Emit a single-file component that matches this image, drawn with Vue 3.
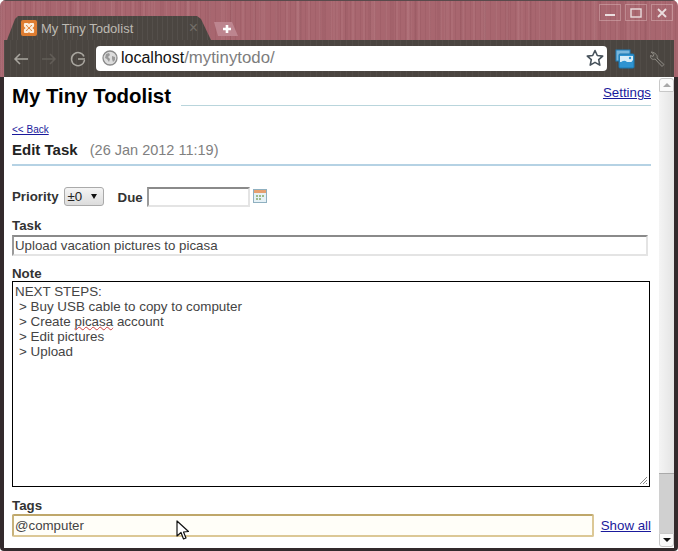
<script setup>
</script>

<template>
  <div class="window">
    <div class="chrome">
      <div class="tabstrip">
        <div class="tab">
          <svg class="favicon" width="16" height="16" viewBox="0 0 16 16">
            <rect width="16" height="16" rx="2" fill="#de7c30" />
            <path d="M4 4h2.500L8 6l1.500-2H12v2l-2 2 2 2v2H9.500L8 10l-1.500 2H4v-2l2-2-2-2z" fill="none" stroke="#fbeede" stroke-width="2.200" stroke-linejoin="round" />
          </svg>
          <span class="tab-title">My Tiny Todolist</span>
          <span class="tab-close">×</span>
        </div>
        <div class="newtab">
          <svg width="10" height="10" viewBox="0 0 10 10"><path d="M5 1v8M1 5h8" stroke="#fff" stroke-width="2.600" /></svg>
        </div>
        <div class="controls">
          <div class="ctl"><svg width="12" height="10" viewBox="0 0 12 10"><path d="M1 7h10" stroke="#eaddde" stroke-width="2" /></svg></div>
          <div class="ctl"><svg width="12" height="10" viewBox="0 0 12 10"><rect x="1" y="1" width="10" height="8" fill="none" stroke="#eaddde" stroke-width="1.400" /></svg></div>
          <div class="ctl"><svg width="12" height="12" viewBox="0 0 12 12"><path d="M2 2l8 8M10 2l-8 8" stroke="#eaddde" stroke-width="1.800" /></svg></div>
        </div>
      </div>
      <div class="toolbar">
        <div class="navs">
          <svg width="18" height="18" viewBox="0 0 18 18"><path d="M16 9H3M8 4L3 9l5 5" fill="none" stroke="#a9a69f" stroke-width="1.500" /></svg>
          <svg width="18" height="18" viewBox="0 0 18 18"><path d="M2 9h13M10 4l5 5-5 5" fill="none" stroke="#625d57" stroke-width="1.500" /></svg>
          <svg width="18" height="18" viewBox="0 0 18 18"><path d="M15 6.500A6.500 6.500 0 1 0 15.500 10M9 9h7" fill="none" stroke="#a9a69f" stroke-width="1.500" /></svg>
        </div>
        <div class="omnibox">
          <svg width="16" height="16" viewBox="0 0 16 16">
            <circle cx="8" cy="8" r="7" fill="#dcdcdc" stroke="#8a8a8a" stroke-width="1.300" />
            <path d="M4 4l3-1 1 2-2 2 2 2-1 3-2-3-2-1zM10 6l3 1 0 3-2 2-1-3z" fill="#9a9a9a" />
          </svg>
          <span class="url"><span class="host">localhost</span><span class="path">/mytinytodo/</span></span>
          <svg class="star" width="18" height="18" viewBox="0 0 18 18"><path d="M9 1.500l2.300 5 5.400.6-4 3.600 1.100 5.400L9 13.400l-4.800 2.700 1.100-5.400-4-3.600 5.400-.6z" fill="#fff" stroke="#48535c" stroke-width="1.600" stroke-linejoin="round" /></svg>
        </div>
        <div class="tools">
          <svg width="20" height="20" viewBox="0 0 20 20">
            <rect x="1" y="1" width="14" height="11" fill="#7ab7dc" stroke="#1d7cb8" />
            <rect x="4" y="5" width="15" height="14" rx="1" fill="#2f93d0" stroke="#1b76ae" />
            <rect x="5" y="7" width="13" height="6" fill="#d6ecf7" />
            <path d="M5 14q4-4 7-1t6-2v7H5z" fill="#2f93d0" />
            <circle cx="15" cy="9" r="1.200" fill="#2f93d0" />
          </svg>
          <svg width="18" height="18" viewBox="0 0 18 18"><path d="M3 2l3 2.500-1 2-2.500-1C2 9 5 10 7 9l7 7.500 2-2L9 8c1-2-1-5.500-6-6z" fill="#4f4b46" stroke="#8f8b84" stroke-width="1" /></svg>
        </div>
      </div>
    </div>
    <div class="frame">
      <div class="page">
        <div class="content">
          <header class="header">
            <h1 class="title">My Tiny Todolist</h1>
            <div class="header-rule"><a class="settings">Settings</a></div>
          </header>
          <a class="back">&lt;&lt; Back</a>
          <h2 class="edit">Edit Task <span class="date">(26 Jan 2012 11:19)</span></h2>
          <div class="row">
            <span class="label">Priority</span>
            <span class="select">±0 <i class="caret"></i></span>
            <span class="label due">Due</span>
            <span class="field due-field"></span>
            <svg class="cal" width="14" height="14" viewBox="0 0 14 14">
              <rect x=".5" y=".5" width="13" height="13" fill="#e6f1f6" stroke="#8fb0c0" />
              <rect x="1" y="1" width="12" height="3" fill="#e6a070" />
              <path d="M3 6h2v2H3zM6 6h2v2H6zM9 6h2v2H9zM3 9h2v2H3zM6 9h2v2H6z" fill="#9dbb8a" />
            </svg>
          </div>
          <div class="label block task-label">Task</div>
          <div class="field task">Upload vacation pictures to picasa</div>
          <div class="label block note-label">Note</div>
          <div class="note">
            <div>NEXT STEPS:</div>
            <div class="ind">&gt; Buy USB cable to copy to computer</div>
            <div class="ind">&gt; Create <span class="spell">picasa</span> account</div>
            <div class="ind">&gt; Edit pictures</div>
            <div class="ind">&gt; Upload</div>
            <svg class="grip" width="9" height="9" viewBox="0 0 9 9"><path d="M8 1L1 8M8 4L4 8M8 7L7 8" stroke="#888" stroke-width="1" /></svg>
          </div>
          <div class="label block tags-label">Tags</div>
          <div class="tags-row">
            <div class="tags">@computer</div>
            <a class="showall">Show all</a>
          </div>
          <svg class="cursor" width="14" height="21" viewBox="0 0 14 21"><path d="M1 1v15l4-3.500 2.500 6.500 2.500-1-2.500-6 5-.5z" fill="#fff" stroke="#111" stroke-width="1.200" stroke-linejoin="round" /></svg>
        </div>
        <div class="scrollbar">
          <div class="sb-btn"><i class="up"></i></div>
          <div class="thumb"></div>
          <div class="track"></div>
          <div class="sb-btn down"><i class="dn"></i></div>
        </div>
      </div>
    </div>
  </div>
</template>

<style>
html, body { margin: 0; background: #fff; }
</style>

<style scoped>
.window {
  width: 678px;
  height: 551px;
  display: flex;
  flex-direction: column;
  overflow: hidden;
  border-radius: 6px 6px 4px 4px;
  font-family: "Liberation Sans", Arial, sans-serif;
}
.chrome {
  padding: 0 4px;
  background-color: #a8666f;
  background-image:
    repeating-linear-gradient(90deg, rgba(70, 20, 30, .07) 0 1px, transparent 1px 5px),
    repeating-linear-gradient(90deg, rgba(255, 220, 220, .06) 0 2px, transparent 2px 11px),
    repeating-linear-gradient(90deg, rgba(70, 20, 30, .05) 0 3px, transparent 3px 23px),
    repeating-linear-gradient(90deg, rgba(255, 220, 220, .04) 0 5px, transparent 5px 37px);
  box-shadow: inset 0 1px 0 #5a4a4c;
}
.tabstrip {
  height: 40px;
  display: flex;
  align-items: flex-end;
  position: relative;
}
.tab {
  width: 206px;
  height: 24px;
  margin-left: 3px;
  padding: 0 8px 0 14px;
  box-sizing: border-box;
  display: flex;
  align-items: center;
  gap: 4px;
  background: #4b4641;
  background-image: repeating-linear-gradient(90deg, rgba(255, 255, 255, .05) 0 1px, transparent 1px 5px);
  clip-path: polygon(0 100%, 8px 3px, 11px 0, 190px 0, 194px 3px, 204px 100%);
}
.favicon { flex: none; }
.tab-title {
  flex: 1;
  font-size: 13px;
  color: #bdbab3;
}
.tab-close { color: #726e68; font-size: 16px; margin-right: 7px; }
.newtab {
  width: 24px;
  height: 14px;
  margin: 0 0 4px 1px;
  display: flex;
  align-items: center;
  justify-content: center;
  background: #bd858f;
  clip-path: polygon(0 0, 18px 0, 24px 100%, 4px 100%);
}
.newtab svg { margin-left: 2px; }
.controls {
  margin-left: auto;
  margin-right: 1px;
  align-self: flex-start;
  margin-top: 4px;
  display: flex;
  gap: 4px;
}
.ctl {
  width: 20px;
  height: 15px;
  border: 1px solid rgba(240, 215, 215, .35);
  display: flex;
  align-items: center;
  justify-content: center;
}
.toolbar {
  height: 37px;
  display: flex;
  align-items: center;
  background: #4a4540;
  background-image: repeating-linear-gradient(90deg, rgba(255, 255, 255, .04) 0 1px, transparent 1px 6px);
}
.navs {
  width: 92px;
  padding-left: 8px;
  box-sizing: border-box;
  display: flex;
  gap: 10px;
}
.navs svg:last-child { margin-left: 1px; }
.omnibox {
  width: 511px;
  height: 25px;
  margin-top: -1px;
  padding: 0 3px 0 6px;
  box-sizing: border-box;
  display: flex;
  align-items: center;
  gap: 3px;
  background: #fff;
  border-radius: 4px;
}
.url { flex: 1; }
.host { color: #111; font-size: 16px; }
.path { color: #7d7d7d; font-size: 16.800px; }
.star { flex: none; }
.tools {
  flex: 1;
  padding-left: 8px;
  display: flex;
  align-items: center;
  gap: 13px;
}
.frame {
  flex: 1;
  min-height: 0;
  padding: 0 4px 3px;
  background: #332a2c;
  display: flex;
}
.page {
  flex: 1;
  display: flex;
  background: #fff;
}
.content {
  flex: 1;
  min-width: 0;
  padding: 0 8px;
  position: relative;
  color: #333;
}
.header {
  height: 29px;
  display: flex;
  align-items: flex-end;
  gap: 10px;
}
.title {
  margin: 0;
  font-size: 20.400px;
  line-height: 20px;
  font-weight: 700;
  color: #000;
}
.header-rule {
  flex: 1;
  height: 28px;
  box-sizing: border-box;
  display: flex;
  justify-content: flex-end;
  border-bottom: 1px solid #b9d5dc;
}
a { color: #1a1a9c; text-decoration: underline; }
.settings { font-size: 13.300px; line-height: 30px; }
.back {
  display: block;
  margin-top: 18px;
  font-size: 10px;
  line-height: 12px;
}
.edit {
  margin: 4px 0 0;
  height: 21px;
  box-sizing: border-box;
  font-size: 15px;
  line-height: 20px;
  color: #222;
}
.date { font-weight: 400; font-size: 14.500px; color: #808080; margin-left: 8px; }
.row {
  margin-top: 3px;
  padding-top: 19px;
  border-top: 2px solid #b5d2e4;
  height: 22px;
  display: flex;
  align-items: center;
}
.label { font-size: 13.300px; font-weight: 700; color: #333; }
.block { line-height: 15px; }
.select {
  margin-left: 5px;
  width: 40px;
  height: 19px;
  padding-left: 3px;
  box-sizing: border-box;
  border: 1px solid #aaa;
  border-radius: 3px;
  background: linear-gradient(#f4f4f4, #dcdcdc);
  font-size: 13.300px;
  line-height: 17px;
  color: #222;
  position: relative;
}
.caret {
  position: absolute;
  right: 6px;
  top: 6px;
  border: 3px solid transparent;
  border-top: 5px solid #111;
  border-bottom: 0;
}
.due { margin-left: 14px; margin-top: 2px; }
.field {
  box-sizing: border-box;
  border: 2px solid;
  border-color: #8a8a8a #e4e4e4 #e4e4e4 #9a9a9a;
  background: #fff;
}
.due-field { width: 103px; height: 20px; margin: 1px 0 0 4px; }
.cal { margin-left: 3px; }
.task-label { margin-top: 11px; }
.task {
  width: 636px;
  height: 21px;
  margin-top: 2px;
  padding-left: 1px;
  font-size: 13.300px;
  line-height: 17px;
  color: #444;
}
.note-label { margin-top: 10px; }
.note {
  width: 638px;
  height: 206px;
  box-sizing: border-box;
  border: 1px solid #000;
  padding: 2px 2px 0;
  font-size: 13.400px;
  line-height: 15px;
  color: #444;
  position: relative;
}
.ind { padding-left: 4px; }
.spell { text-decoration: underline wavy #d04040 1px; text-underline-offset: 0; text-decoration-skip-ink: none; }
.grip { position: absolute; right: 1px; bottom: 1px; }
.tags-label { margin-top: 11px; }
.tags-row {
  margin-top: 1px;
  display: flex;
  align-items: center;
  gap: 7px;
}
.tags {
  width: 582px;
  height: 23px;
  box-sizing: border-box;
  border: 2px solid #dcc896;
  border-top-color: #bfa76a;
  border-left-color: #c8b27a;
  border-radius: 2px;
  padding-left: 1px;
  background: #fffef8;
  font-size: 13.300px;
  line-height: 19px;
  color: #444;
}
.showall { font-size: 13.300px; }
.cursor { position: absolute; left: 172px; top: 443px; }
.scrollbar {
  width: 15px;
  flex: none;
  display: flex;
  flex-direction: column;
  margin: 1px 0;
}
.sb-btn {
  height: 14px;
  flex: none;
  box-sizing: border-box;
  border: 1px solid #c8c8c8;
  border-radius: 3px 3px 0 0;
  background: #fafafa;
  display: flex;
  align-items: center;
  justify-content: center;
}
.sb-btn.down { border-radius: 0 0 3px 3px; }
.up { border: 4px solid transparent; border-bottom: 4px solid #a8a8a8; border-top: 0; }
.dn { border: 4px solid transparent; border-top: 4px solid #111; border-bottom: 0; }
.thumb {
  height: 382px;
  flex: none;
  box-sizing: border-box;
  background: linear-gradient(90deg, #f4f4f4, #e4e4e4);
  border-bottom: 1px solid #aaa;
}
.track { flex: 1; background: #d0d0d0; }
</style>
